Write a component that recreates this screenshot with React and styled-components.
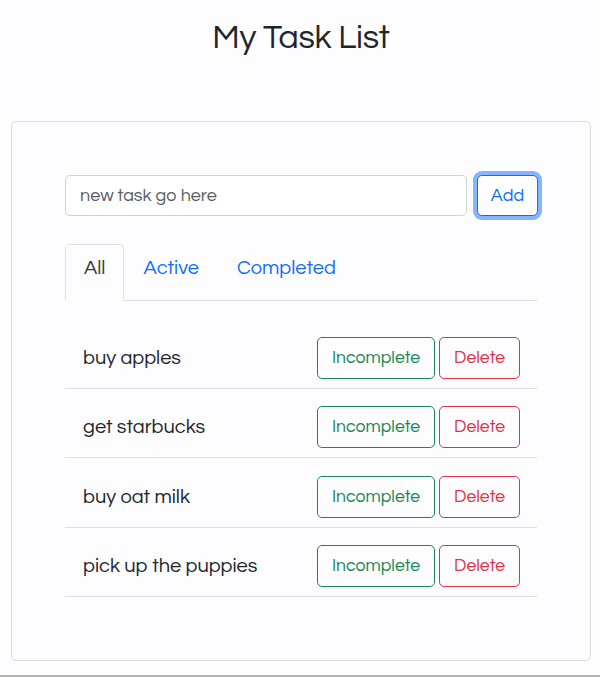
import React, { useState } from "react";
import styled, { createGlobalStyle } from "styled-components";

const GlobalStyle = createGlobalStyle`
  html, body {
    margin: 0;
    padding: 0;
    background: #fdfcff;
    font-family: "Questrial", Inter, "Noto Sans", sans-serif;
    color: #212529;
  }
  * { box-sizing: border-box; }
`;

const Page = styled.div`
  width: 600px;
  height: 677px;
  overflow: hidden;
  display: flex;
  flex-direction: column;
  align-items: stretch;
  padding: 0 9px 0 11px;
  border-bottom: 2px solid #b5b5b5;
`;

const Title = styled.h1`
  margin: 16px 0 0;
  height: 44px;
  text-align: center;
  font-size: 34px;
  font-weight: 400;
  line-height: 44px;
  letter-spacing: -0.3px;
`;

const Card = styled.div`
  margin-top: 61px;
  border: 1px solid #dcdcdf;
  border-radius: 5px;
  padding: 53px 53px 63px;
  height: 540px;
`;

const AddRow = styled.form`
  display: flex;
  align-items: center;
  gap: 10px;
  margin-bottom: 28px;
`;

const TaskInput = styled.input`
  flex: 1;
  height: 41px;
  border: 1px solid #cfd2d6;
  border-radius: 5px;
  padding: 0 14px;
  font-family: inherit;
  font-size: 18px;
  background: #fff;
  color: #212529;
  &::placeholder { color: #5b5e62; }
`;

const AddButton = styled.button`
  height: 41px;
  width: 61px;
  margin-right: -1px;
  border: 1px solid #0d6efd;
  border-radius: 5px;
  background: #fff;
  color: #0d6efd;
  font-family: inherit;
  font-size: 18px;
  box-shadow: 0 0 0 4px rgba(13, 110, 253, 0.5);
`;

const Tabs = styled.div`
  display: flex;
  border-bottom: 1px solid #dee2e6;
  margin-bottom: 18px;
`;

const Tab = styled.button`
  height: 57px;
  padding: 0 18px 10px;
  margin-bottom: -1px;
  border: 1px solid ${(p) => (p.$active ? "#dee2e6" : "transparent")};
  border-bottom-color: ${(p) => (p.$active ? "#fdfcff" : "transparent")};
  border-radius: 5px 5px 0 0;
  background: ${(p) => (p.$active ? "#fdfcff" : "transparent")};
  color: ${(p) => (p.$active ? "#343a40" : "#0d6efd")};
  font-family: inherit;
  font-size: 20px;
  cursor: pointer;
`;

const List = styled.ul`
  list-style: none;
  margin: 0;
  padding: 0;
`;

const Row = styled.li`
  display: flex;
  align-items: center;
  justify-content: space-between;
  height: 69.5px;
  padding: 9px 17px 0 18px;
  border-bottom: 1px solid #dee2e6;
`;

const TaskName = styled.span`
  font-size: 20px;
`;

const Actions = styled.div`
  display: flex;
  gap: 4px;
`;

const OutlineButton = styled.button`
  height: 42px;
  padding: 0 14px;
  border: 1px solid ${(p) => p.$color};
  border-radius: 5px;
  background: transparent;
  color: ${(p) => p.$color};
  font-family: inherit;
  font-size: 17.6px;
  cursor: pointer;
`;

const tasks = ["buy apples", "get starbucks", "buy oat milk", "pick up the puppies"];

export default function App() {
  const [tab, setTab] = useState("All");
  return (
    <Page>
      <GlobalStyle />
      <Title>My Task List</Title>
      <Card>
        <AddRow onSubmit={(e) => e.preventDefault()}>
          <TaskInput placeholder="new task go here" />
          <AddButton type="submit">Add</AddButton>
        </AddRow>
        <Tabs>
          {["All", "Active", "Completed"].map((t) => (
            <Tab key={t} $active={tab === t} onClick={() => setTab(t)}>
              {t}
            </Tab>
          ))}
        </Tabs>
        <List>
          {tasks.map((t) => (
            <Row key={t}>
              <TaskName>{t}</TaskName>
              <Actions>
                <OutlineButton $color="#198754">Incomplete</OutlineButton>
                <OutlineButton $color="#dc3545">Delete</OutlineButton>
              </Actions>
            </Row>
          ))}
        </List>
      </Card>
    </Page>
  );
}
